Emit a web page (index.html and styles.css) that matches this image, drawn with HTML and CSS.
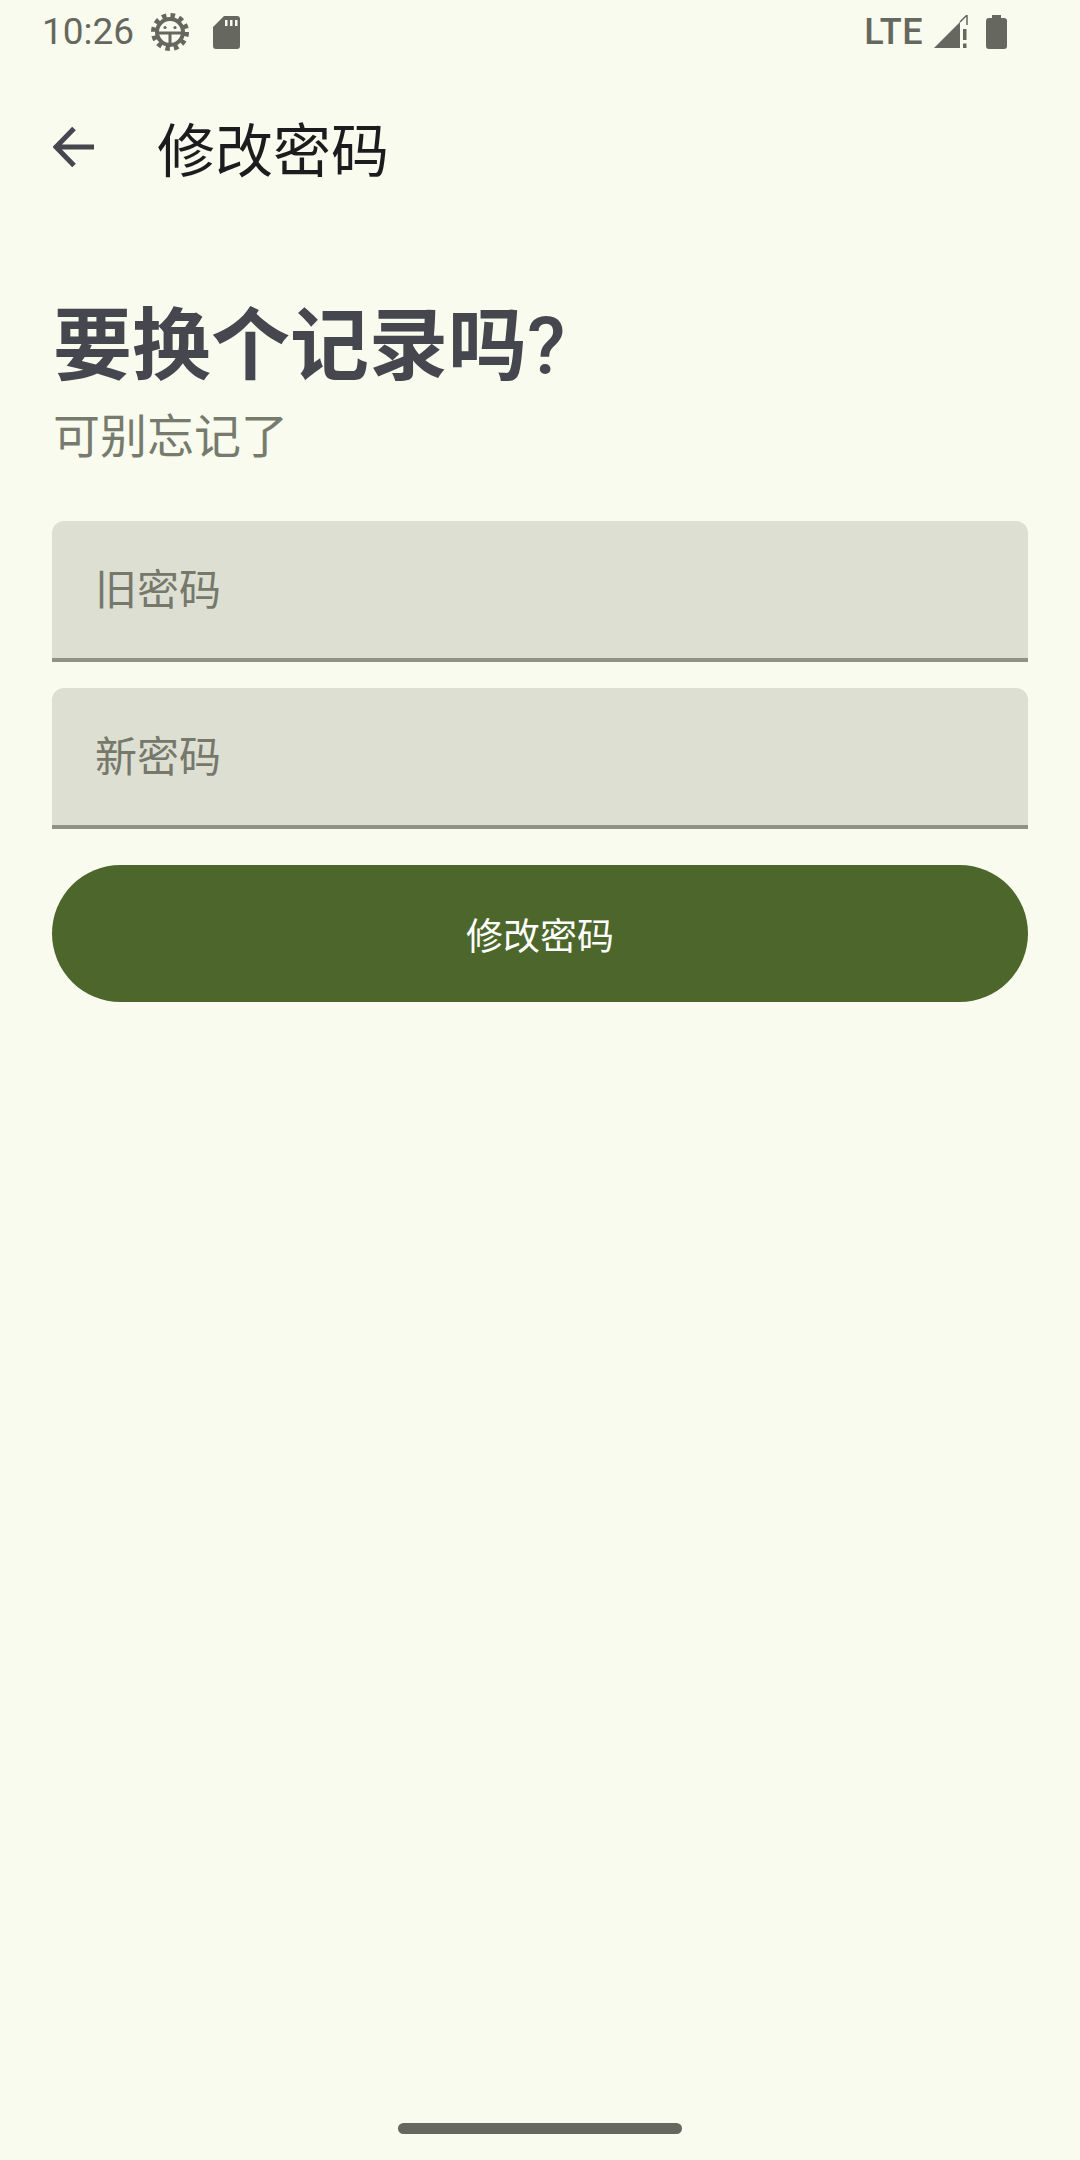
FILE: index.html
```html
<!DOCTYPE html>
<html lang="zh-CN">

<head>
    <meta charset="UTF-8">
    <meta name="viewport" content="width=device-width, initial-scale=1.0">
    <title>修改密码</title>
    <link rel="stylesheet" href="styles.css">
</head>

<body>
    <div class="screen">
        <div class="status-bar">
            <div class="status-left">
                <span class="time">10:26</span>
                <svg class="icon-gear" width="38" height="38" viewBox="0 0 38 38">
                    <circle cx="19" cy="19" r="16.500" fill="none" stroke="#66675e" stroke-width="5" stroke-dasharray="4.500 4.140" />
                    <circle cx="19" cy="19" r="13" fill="none" stroke="#66675e" stroke-width="4" />
                    <path d="M7 20h24M19 20v12" stroke="#66675e" stroke-width="3" fill="none" />
                    <circle cx="14" cy="14.500" r="1.600" fill="#66675e" />
                    <circle cx="24" cy="14.500" r="1.600" fill="#66675e" />
                </svg>
                <svg class="icon-sd" width="27" height="33" viewBox="0 0 27 33">
                    <path fill-rule="evenodd" fill="#66675e" d="M11 0h13a3 3 0 0 1 3 3v27a3 3 0 0 1-3 3H3a3 3 0 0 1-3-3V11zM12 4v6h2.500V4zM17 4v6h2.500V4zM22 4v6h2.500V4z" />
                </svg>
            </div>
            <div class="status-right">
                <span class="lte">LTE</span>
                <svg class="icon-signal" width="34" height="34" viewBox="0 0 34 34">
                    <path fill="#66675e" d="M0 33L26 7v26z" />
                    <path fill="none" stroke="#66675e" stroke-width="1.500" d="M26 7L33 0v10" />
                    <path fill="#66675e" d="M29 14h3.500v11H29zM29 28.500h3.500V33H29z" />
                </svg>
                <svg class="icon-battery" width="21" height="34" viewBox="0 0 21 34">
                    <path fill="#66675e" d="M6 0h9v3h3a3 3 0 0 1 3 3v25a3 3 0 0 1-3 3H3a3 3 0 0 1-3-3V6a3 3 0 0 1 3-3h3z" />
                </svg>
            </div>
        </div>

        <header class="app-bar">
            <svg class="icon-back" width="42" height="42" viewBox="0 0 42 42">
                <path d="M41 21H4M21 2.500L3 21l18 18.500" fill="none" stroke="#46464f" stroke-width="5" />
            </svg>
            <h1 class="app-title">修改密码</h1>
        </header>

        <main class="content">
            <h2 class="headline">要换个记录吗<span class="headline-mark">?</span></h2>
            <p class="subline">可别忘记了</p>
            <form class="pw-form">
                <input class="field" type="password" placeholder="旧密码">
                <input class="field" type="password" placeholder="新密码">
                <button class="submit" type="button">修改密码</button>
            </form>
        </main>

        <div class="nav-handle"></div>
    </div>
</body>

</html>
```

FILE: styles.css
```css
body {
    margin: 0;
    padding: 0;
    background-color: #f9fbee;
    font-family: "Noto Sans CJK SC", "Noto Sans", sans-serif;
}

.screen {
    width: 1080px;
    height: 2160px;
    display: flex;
    flex-direction: column;
    overflow: hidden;
}

/* status bar */
.status-bar {
    height: 64px;
    display: flex;
    justify-content: space-between;
    align-items: center;
    padding: 0 73px 0 42px;
    color: #66675e;
    font-family: Roboto, sans-serif;
}

.status-left,
.status-right {
    display: flex;
    align-items: center;
}

.time {
    font-size: 37px;
    line-height: 66px;
}

.icon-gear {
    margin-left: 17px;
}

.icon-sd {
    margin-left: 24px;
}

.lte {
    font-size: 36px;
    font-weight: 500;
    letter-spacing: 0.5px;
}

.icon-signal {
    margin-left: 11px;
}

.icon-battery {
    margin-left: 18px;
}

/* app bar */
.app-bar {
    box-sizing: border-box;
    height: 170px;
    padding: 0 0 5px 53px;
    display: flex;
    align-items: center;
}

.icon-back {
    flex-shrink: 0;
}

.app-title {
    margin: 0 0 0 62px;
    font-size: 58px;
    font-weight: 400;
    line-height: 80px;
    color: #1c1c1e;
}

/* content */
.content {
    padding: 63px 52px 0;
    flex: 1;
}

.headline {
    margin: 0 0 0 1px;
    font-family: Roboto, "Noto Sans CJK SC", sans-serif;
    font-size: 79px;
    font-weight: 700;
    line-height: 100px;
    color: #46464f;
}

.headline-mark {
    font-weight: 500;
}

.subline {
    margin: 6px 0 0 1px;
    font-size: 47px;
    line-height: 60px;
    color: #777b6d;
}

.pw-form {
    margin-top: 58px;
    display: flex;
    flex-direction: column;
}

.field {
    box-sizing: border-box;
    width: 100%;
    height: 141px;
    margin-bottom: 26px;
    padding: 0 43px 6px;
    border: 0;
    border-bottom: 4px solid #8f9284;
    border-radius: 12px 12px 0 0;
    background-color: #dddfd2;
    font-family: inherit;
    font-size: 42px;
    outline: none;
}

.field::placeholder {
    color: #75786b;
    opacity: 1;
}

.submit {
    height: 137px;
    margin-top: 10px;
    border: 0;
    border-radius: 69px;
    background-color: #4c662b;
    color: #fff;
    font-family: inherit;
    font-size: 37px;
}

.nav-handle {
    width: 284px;
    height: 11px;
    margin: 0 auto 26px;
    border-radius: 6px;
    background-color: #66675e;
}
```
